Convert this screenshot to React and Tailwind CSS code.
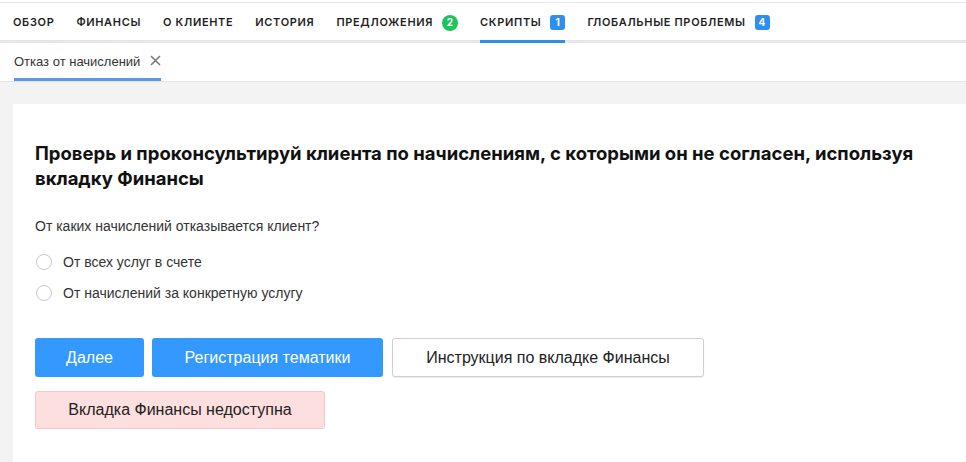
import React, { useState } from "react";

const tabs = [
  { label: "Обзор" },
  { label: "Финансы" },
  { label: "О клиенте" },
  { label: "История" },
  { label: "Предложения", badge: "2", badgeColor: "green" },
  { label: "Скрипты", badge: "1", badgeColor: "blue", active: true },
  { label: "Глобальные проблемы", badge: "4", badgeColor: "blue" },
];

const options = ["От всех услуг в счете", "От начислений за конкретную услугу"];

export default function App() {
  const [choice, setChoice] = useState(null);

  return (
    <div className="min-h-screen bg-[#f3f3f3] font-['Liberation_Sans',Arial,sans-serif]">
      {/* main tabs */}
      <div className="bg-white pt-[2px]">
        <div className="border-t border-[#e8e8e8]" />
        <div className="flex h-[40px] items-stretch gap-[22px] px-[13px] pt-[2px] font-['Inter',sans-serif] border-b-[3px] border-[#e6e6e6]">
          {tabs.map((t) => (
            <div
              key={t.label}
              className={
                "relative flex items-center gap-[9px] text-[11px] font-semibold uppercase tracking-[0.06em] text-[#1f1f1f] " +
                (t.active ? "after:absolute after:left-0 after:right-0 after:bottom-[-3px] after:h-[3px] after:bg-[#2d8ff0]" : "")
              }
            >
              <span>{t.label}</span>
              {t.badge && (
                <span
                  className={
                    t.badgeColor === "green"
                      ? "flex h-[16px] w-[16px] items-center justify-center rounded-full bg-[#1dc45a] text-[10px] font-bold text-white"
                      : "flex h-[15px] w-[15px] items-center justify-center rounded-[3px] bg-[#2d8ff0] text-[10px] font-bold text-white"
                  }
                >
                  {t.badge}
                </span>
              )}
            </div>
          ))}
        </div>
      </div>

      {/* script sub-tabs */}
      <div className="flex h-[39px] bg-white px-[14px] border-b border-[#e4e4e4]">
        <div className="flex items-center gap-[10px] border-b-[3px] border-[#5a98e6] pt-[2px]">
          <span className="text-[13px] text-[#333]">Отказ от начислений</span>
          <svg width="11" height="11" viewBox="0 0 11 11" className="mt-[-3px]">
            <path d="M1 1L10 10M10 1L1 10" stroke="#7a7a7a" strokeWidth="1.6" />
          </svg>
        </div>
      </div>

      {/* script card */}
      <div className="ml-[13px] mt-[22px] bg-white pl-[22px] pt-[37px] pb-[40px]">
        <h2 className="max-w-[910px] font-['Inter',sans-serif] text-[18.5px] font-bold leading-[25px] text-[#111]">
          Проверь и проконсультируй клиента по начислениям, с которыми он не согласен, используя вкладку Финансы
        </h2>

        <p className="mt-[25px] text-[14px] leading-[20px] text-[#333]">От каких начислений отказывается клиент?</p>

        <div className="mt-[16px] flex flex-col gap-[11px]">
          {options.map((o, i) => (
            <label key={o} className="flex h-[20px] items-center gap-[11px] text-[14px] text-[#333]">
              <span
                onClick={() => setChoice(i)}
                className="ml-[1px] flex h-[16px] w-[16px] items-center justify-center rounded-full border border-[#c8c8c8] bg-white"
              >
                {choice === i && <span className="h-[8px] w-[8px] rounded-full bg-[#3399ff]" />}
              </span>
              {o}
            </label>
          ))}
        </div>

        <div className="mt-[35px] flex gap-[8px]">
          <button className="h-[39px] w-[109px] rounded-[3px] bg-[#3399ff] text-[16px] text-white">Далее</button>
          <button className="h-[39px] w-[231px] rounded-[3px] bg-[#3399ff] text-[16px] text-white">Регистрация тематики</button>
          <button className="ml-[1px] h-[39px] w-[312px] rounded-[3px] border border-[#cfcfcf] bg-white text-[16px] text-[#222] shadow-[0_1px_1px_rgba(0,0,0,0.08)]">
            Инструкция по вкладке Финансы
          </button>
        </div>

        <button className="mt-[14px] h-[38px] w-[290px] rounded-[3px] border border-[#f1c7c7] bg-[#fddfdf] text-[16px] text-[#222]">
          Вкладка Финансы недоступна
        </button>
      </div>
    </div>
  );
}
